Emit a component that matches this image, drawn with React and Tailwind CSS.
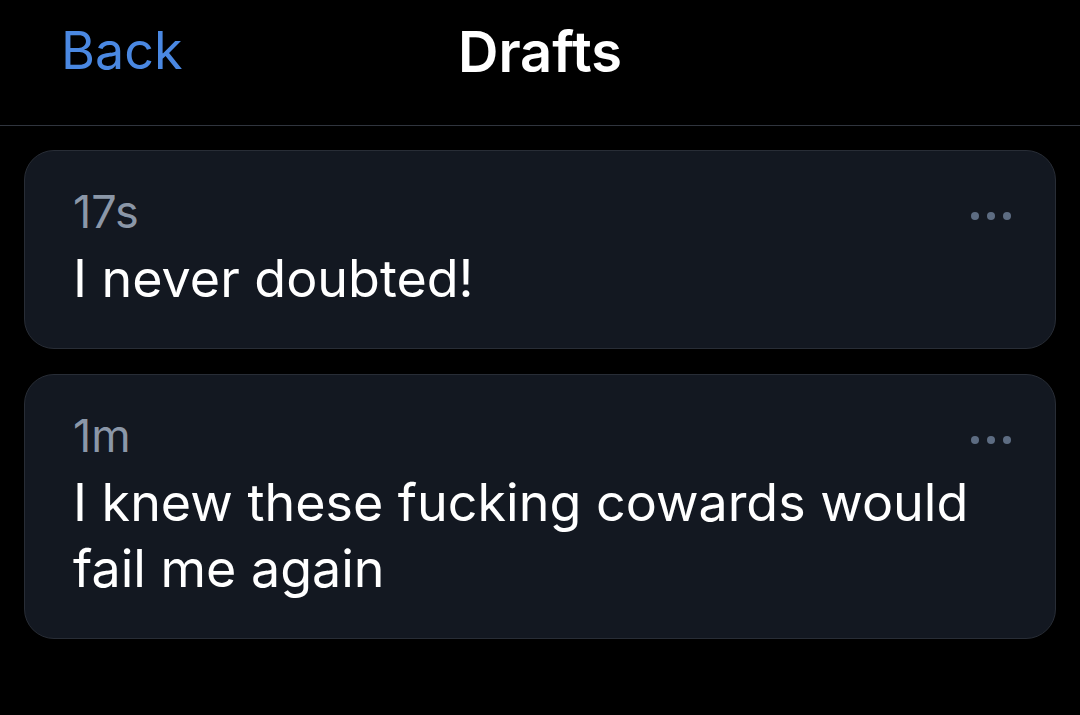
const drafts = [
  { id: 1, time: "17s", text: "I never doubted!" },
  { id: 2, time: "1m", text: "I knew these fucking cowards would fail me again" },
];

const Dots = () => (
  <div className="absolute right-[44px] top-[61px] flex items-center gap-[8px]">
    <span className="w-[8px] h-[8px] rounded-full bg-[#5d6c82]" />
    <span className="w-[8px] h-[8px] rounded-full bg-[#5d6c82]" />
    <span className="w-[8px] h-[8px] rounded-full bg-[#5d6c82]" />
  </div>
);

export default function App() {
  return (
    <div className="w-[1080px] h-[715px] bg-black text-white font-['Inter',sans-serif] overflow-hidden">
      <div className="relative h-[126px] border-b border-[#30353e]">
        <button className="absolute left-[61px] top-[19px] text-[52px] leading-[64px] text-[#4a88e2]">Back</button>
        <h1 className="w-full text-center pt-[20px] text-[56px] leading-[64px] font-semibold">Drafts</h1>
      </div>
      <div className="px-[24px] pt-[24px] flex flex-col gap-[25px]">
        {drafts.map((d) => (
          <div
            key={d.id}
            className="relative bg-[#131821] border border-[#282d36] rounded-[30px] pl-[48px] pr-[48px] pt-[27px] pb-[36px]"
          >
            <p className="text-[45px] leading-[68px] text-[#8b97a8]">{d.time}</p>
            <p className="text-[52px] leading-[66px] text-white">{d.text}</p>
            <Dots />
          </div>
        ))}
      </div>
    </div>
  );
}
